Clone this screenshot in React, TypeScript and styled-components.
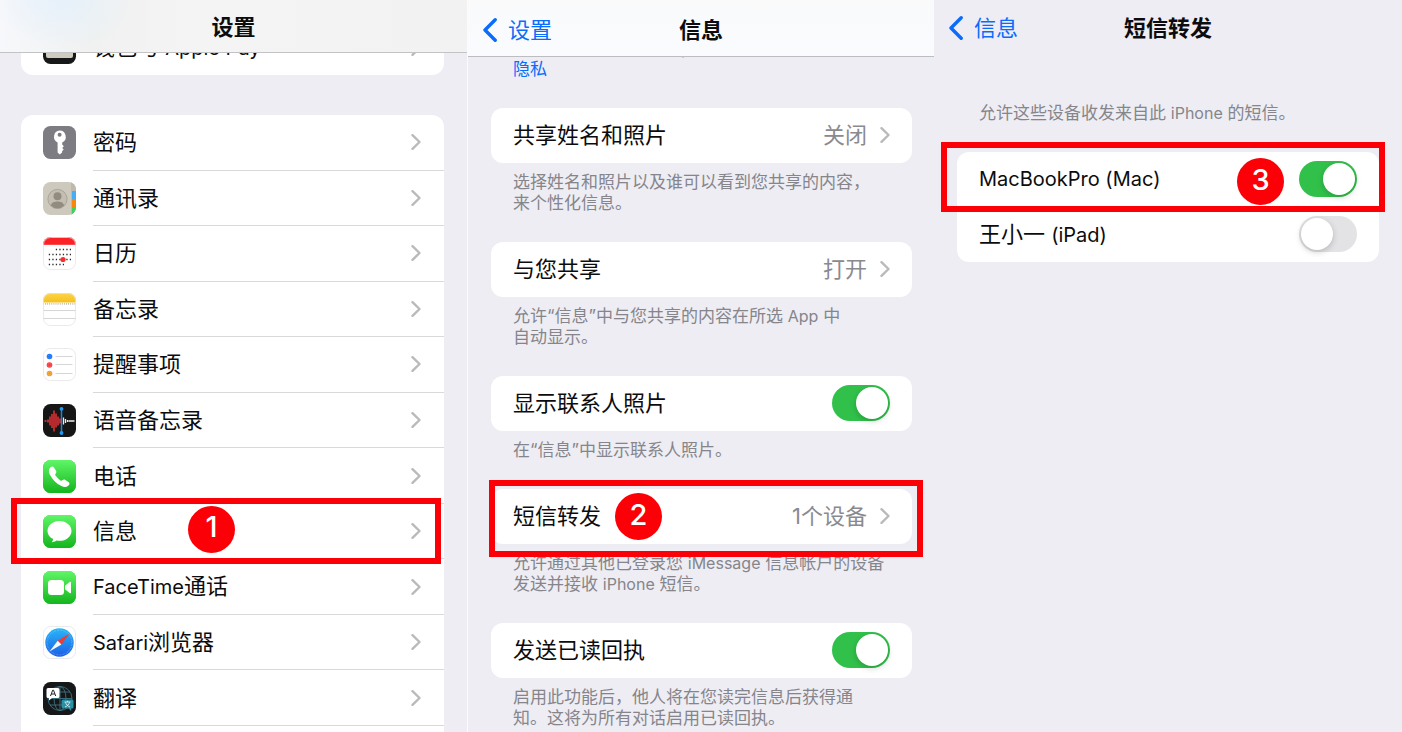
import React from "react";
import styled, { createGlobalStyle, css } from "styled-components";

const GlobalStyle = createGlobalStyle`
  *, *::before, *::after { box-sizing: border-box; }
  body {
    margin: 0;
    background: #eeedf3;
    color: #0c0c0e;
    font-family: Inter, "Noto Sans CJK SC", sans-serif;
    font-size: 22px;
    line-height: 28px;
  }
`;

const Screens = styled.main`
  display: grid;
  grid-template-columns: 467fr 467fr 468fr;
  height: 100vh;
  overflow: hidden;
`;

const Screen = styled.section<{ $divided?: boolean }>`
  display: flex;
  flex-direction: column;
  min-width: 0;
  min-height: 0;
  overflow: hidden;
  background: #eeedf3;
  ${(p) => p.$divided && css`border-left: 1px solid #fbfbfd;`}
`;

const NavBar = styled.header<{ $height: number; $tone?: "warm" | "cool" }>`
  flex: none;
  height: ${(p) => p.$height}px;
  display: grid;
  grid-template-columns: 1fr auto 1fr;
  align-items: center;
  padding: 2px 14px 0;
  ${(p) =>
    p.$tone === "warm" &&
    css`
      border-bottom: 1px solid #c3c3c5;
      background: radial-gradient(ellipse 70px 50px at 62px 0, #e6f1fb, transparent),
        linear-gradient(90deg, #f7f8fb 0, #f0f1f0 90px, #f4f4f4 200px, #f2f2f2 100%);
    `}
  ${(p) =>
    p.$tone === "cool" &&
    css`
      padding-top: 4px;
      border-bottom: 1px solid #bcbcc1;
      background: linear-gradient(#fafafb, #f9fbfe);
    `}
`;

const Title = styled.h1`
  grid-column: 2;
  margin: 0;
  font-size: 22px;
  line-height: 28px;
  font-weight: 600;
`;

const BackButton = styled.button`
  justify-self: start;
  display: flex;
  align-items: center;
  gap: 10px;
  padding: 0;
  border: 0;
  background: none;
  color: #0a6cfb;
  font: inherit;
  cursor: pointer;
`;

const Content = styled.div<{ $top?: number; $left?: number; $right?: number }>`
  flex: 1;
  min-height: 0;
  overflow: hidden;
  padding: ${(p) => p.$top ?? 0}px ${(p) => p.$right ?? 23}px 0 ${(p) => p.$left ?? 23}px;
`;

/* The part of a list that has been scrolled up past the navigation bar. */
const Scrolled = styled.div<{ $by: number }>`
  margin-top: -${(p) => p.$by}px;
`;

const Card = styled.div<{ $gap?: number }>`
  margin-bottom: ${(p) => p.$gap ?? 0}px;
  border-radius: 12px;
  background: #fff;
`;

const AppList = styled(Card)`
  display: grid;
  grid-template-rows: repeat(11, 1fr);
  height: 631px;
  padding-bottom: 20px;
`;

const rowLook = css`
  position: relative;
  display: flex;
  align-items: center;
  width: 100%;
  height: 55px;
  padding: 0 22px 1px;
  border: 0;
  background: none;
  color: inherit;
  font: inherit;
  text-align: left;
`;

const AppRow = styled.button`
  ${rowLook}
  height: 100%;
  min-height: 55px;
  padding: 0 0 0 22px;
  gap: 17px;
  cursor: pointer;
`;

const AppRowBody = styled.span<{ $last?: boolean }>`
  flex: 1;
  align-self: stretch;
  display: flex;
  align-items: center;
  justify-content: space-between;
  padding-right: 23px;
  border-bottom: ${(p) => (p.$last ? "0" : "1px solid #d9d9dc")};
`;

const LinkRow = styled.button`
  ${rowLook}
  cursor: pointer;
`;

const SwitchRow = styled.label`
  ${rowLook}
  justify-content: space-between;
`;

const Value = styled.span`
  margin: 0 13px 0 auto;
  color: #8a8a8e;
`;

const Latin = styled.span`
  font-size: 20px;
`;

const SmallLatin = styled.span`
  font-size: 16px;
`;

const Note = styled.p`
  margin: 0 0 28px;
  padding: 9px 0 0 22px;
  color: #85858b;
  font-size: 17px;
  line-height: 21px;
  white-space: nowrap;
`;

const NoteLink = styled.a`
  color: #0a6cfb;
  text-decoration: none;
`;

const Switch = styled.input`
  appearance: none;
  flex: none;
  width: 58px;
  height: 36px;
  margin: 0;
  padding: 2px;
  border-radius: 18px;
  background: #e3e3e5;
  display: flex;
  cursor: pointer;
  &::before {
    content: "";
    width: 32px;
    height: 32px;
    border-radius: 50%;
    background: #fff;
    box-shadow: 0 2px 6px rgba(0, 0, 0, 0.2);
  }
  &:checked {
    justify-content: flex-end;
    background: #31c14a;
  }
`;

const Highlight = styled.span<{ $inset: string }>`
  position: absolute;
  z-index: 1;
  inset: ${(p) => p.$inset};
  border: 6px solid #fb0007;
  pointer-events: none;
`;

const Badge = styled.span<{ $top: number; $left?: number; $right?: number }>`
  position: absolute;
  z-index: 1;
  top: ${(p) => p.$top}px;
  ${(p) => p.$left !== undefined && css`left: ${p.$left}px;`}
  ${(p) => p.$right !== undefined && css`right: ${p.$right}px;`}
  display: grid;
  place-items: center;
  width: 47px;
  height: 47px;
  padding-bottom: 4px;
  border-radius: 50%;
  background: #fb0007;
  color: #fff;
  font-size: 29px;
  font-weight: 500;
  pointer-events: none;
`;

const Icon = styled.svg`
  flex: none;
  display: block;
`;

const Disclosure = () => (
  <Icon width="10" height="16" viewBox="0 0 10 16" fill="none" aria-hidden="true">
    <path d="M1.5 1.2 8.5 8l-7 6.8" stroke="#bababd" strokeWidth="2.4" strokeLinecap="round" strokeLinejoin="round" />
  </Icon>
);

const Back = ({ label }: { label: string }) => (
  <BackButton type="button">
    <Icon width="16" height="24" viewBox="0 0 16 24" fill="none" aria-hidden="true">
      <path d="M13.2 1.8 3 12l10.200 10.200" stroke="currentColor" strokeWidth="3.400" strokeLinecap="round" strokeLinejoin="round" />
    </Icon>
    {label}
  </BackButton>
);

const Tile = ({ fill, outline, children }: { fill: string; outline?: boolean; children: React.ReactNode }) => (
  <Icon width="33" height="33" viewBox="0 0 33 33" aria-hidden="true">
    <defs>
      <linearGradient id="tile-green" x1="0" y1="0" x2="0" y2="1">
        <stop offset="0" stopColor="#5ff667" />
        <stop offset="1" stopColor="#14b51e" />
      </linearGradient>
      <linearGradient id="tile-yellow" x1="0" y1="0" x2="0" y2="1">
        <stop offset="0" stopColor="#fcd54a" />
        <stop offset="1" stopColor="#f6c01b" />
      </linearGradient>
      <linearGradient id="tile-blue" x1="0" y1="0" x2="0" y2="1">
        <stop offset="0" stopColor="#29b6f5" />
        <stop offset="1" stopColor="#1c5fe8" />
      </linearGradient>
      <clipPath id="tile-shape">
        <rect width="33" height="33" rx="7.5" />
      </clipPath>
    </defs>
    <g clipPath="url(#tile-shape)">
      <rect width="33" height="33" fill={fill === "green" ? "#37d63f" : fill} />
      {fill === "green" && <path d="M0 0h33v33H0Z" fill="url(#tile-green)" />}
      {children}
    </g>
    {outline && <rect x=".5" y=".5" width="32" height="32" rx="7" fill="none" stroke="#e4e4e6" strokeWidth=".8" />}
  </Icon>
);

const WalletIcon = () => (
  <Tile fill="#171818">
    <rect x="3" y="4" width="27" height="23" rx="2" fill="#cfcbbf" />
  </Tile>
);

const KeyIcon = () => (
  <Tile fill="#7d7c82">
    <path
      fill="#fff"
      fillRule="evenodd"
      d="M16.6 4.6a6.2 6.2 0 0 1 2.6 11.8v2.2l1.6 1.6-1.6 1.7 1.5 1.6-1.6 1.7v1.2l-2.3 2.2-2.2-2.2v-10A6.2 6.2 0 0 1 16.6 4.6Zm0 2.1a2 2 0 1 0 0 4 2 2 0 0 0 0-4Z"
    />
  </Tile>
);

const ContactsIcon = () => (
  <Tile fill="#cdc9bc">
    <rect x="28" width="5" height="33" fill="#bdb9ab" />
    <rect x="29" y="9" width="4" height="8" fill="#46aef5" />
    <rect x="29" y="17" width="4" height="8" fill="#fb8410" />
    <rect x="29" y="25" width="4" height="8" fill="#41d158" />
    <circle cx="14.5" cy="17" r="9.6" fill="#c3beb1" stroke="#a19c90" strokeWidth=".8" />
    <circle cx="14.5" cy="14.2" r="4" fill="#918b80" />
    <path d="M7.8 23.4c1-3.2 3.6-4 6.7-4s5.7.8 6.7 4a9.4 9.4 0 0 1-13.4 0Z" fill="#918b80" />
  </Tile>
);

const CalendarIcon = () => (
  <Tile fill="#fff" outline>
    <rect width="33" height="7.8" fill="#fc2125" />
    <path
      d="M12.8 12.5H28M5.8 17.5H28M5.8 22.5H28M5.8 27.5H21"
      stroke="#2a2a2c"
      strokeWidth="1.5"
      strokeDasharray="1.3 2.2"
    />
    <circle cx="20" cy="22.5" r="2.6" fill="#fb2d2f" />
  </Tile>
);

const NotesIcon = () => (
  <Tile fill="#fff" outline>
    <rect width="33" height="9.5" fill="url(#tile-yellow)" />
    <path d="M0 10.900h33" stroke="#b4b4b4" strokeWidth="1.800" strokeDasharray=".8 1.300" />
    <path d="M0 17.500h33M0 25.500h33" stroke="#d6d6d8" />
  </Tile>
);

const RemindersIcon = () => (
  <Tile fill="#fff" outline>
    <path d="M12.5 8.500h17M12.5 16.500h17M12.5 25.500h17" stroke="#d6d6d8" />
    {([["#1a73f8", 8.5], ["#f9373a", 17], ["#f79a1e", 25.500]] as [string, number][]).map(([color, y]) => (
      <g key={color}>
        <circle cx="6.5" cy={y} r="2.8" fill={color} />
        <circle cx="6.5" cy={y} r="1.7" fill="none" stroke="#fff" strokeOpacity=".25" strokeWidth=".6" />
      </g>
    ))}
  </Tile>
);

const VoiceIcon = () => (
  <Tile fill="#161617">
    <path d="M1.500 17h2M5 15.500v3M7 12.500v9M9 10v14M11 6.500v21M13 9.500v14M15 12.500v9M17 14.500v5" stroke="#ea3236" strokeWidth="1.500" />
    <path d="M20.500 13.500v7M22.500 15v4M24.500 16v2M25.500 17h6" stroke="#efefef" strokeWidth="1.300" />
    <path d="M18.500 4.500v25" stroke="#1689de" strokeWidth="1.500" />
    <circle cx="18.500" cy="4.800" r="1.900" fill="#1d9bf5" />
    <circle cx="18.500" cy="29" r="1.900" fill="#1d9bf5" />
  </Tile>
);

const PhoneIcon = () => (
  <Tile fill="green">
    <path
      fill="#fff"
      d="M7 7.8c1.6-1.8 3-1.5 3.9-.2l2 3c.8 1.2.5 2.2-.3 3.1-.6.7-.5 1.2 0 1.9 1.2 1.8 2.9 3.5 4.8 4.8.7.5 1.3.5 1.9-.1 1-.9 2-1 3.1-.3l3 2c1.4 1 1.5 2.3-.2 3.8-1.8 1.6-4.300 1.500-6.800.300-5-2.500-9.200-6.600-11.600-11.600-1.100-2.400-1.300-4.900.200-6.700Z"
    />
  </Tile>
);

const MessagesIcon = () => (
  <Tile fill="green">
    <path
      fill="#fff"
      d="M16.5 6c6.7 0 12 4.4 12 9.9s-5.3 9.9-12 9.9c-1.1 0-2.2-.1-3.2-.4-1.2 1-2.8 1.7-4.7 1.8 1-1 1.6-2 1.6-3.1-3.5-1.7-5.7-4.7-5.7-8.2C4.5 10.4 9.8 6 16.5 6Z"
    />
  </Tile>
);

const FaceTimeIcon = () => (
  <Tile fill="green">
    <rect x="5" y="9" width="16" height="15" rx="3.5" fill="#fff" />
    <path d="m22 14.700 4.600-3.800c.7-.5 1.400-.2 1.400.6v10c0 .8-.7 1.100-1.400.6L22 18.300Z" fill="#fff" />
  </Tile>
);

const SafariIcon = () => (
  <Tile fill="#fff" outline>
    <circle cx="16.5" cy="16.5" r="14.2" fill="url(#tile-blue)" />
    <circle cx="16.5" cy="16.5" r="12.4" fill="none" stroke="#fff" strokeOpacity=".35" strokeWidth="1.3" strokeDasharray=".5 1" />
    <path d="M26.5 7.5 18.4 18.5l-3.7-3.8Z" fill="#ee3b36" />
    <path d="M6.5 25.5l8.2-10.8 3.7 3.8Z" fill="#f7f9fb" />
  </Tile>
);

const TranslateIcon = () => (
  <Tile fill="#161718">
    <g fill="none" stroke="#3d7480" strokeWidth=".9">
      <circle cx="17" cy="16.5" r="12" />
      <ellipse cx="17" cy="16.5" rx="6" ry="12" />
      <path d="M17 4.5v24M5 16.5h24M7 10h20M7 23h20" />
    </g>
    <path d="M5 6h10a1.5 1.5 0 0 1 1.500 1.500v7A1.500 1.500 0 0 1 15 16H9l-3 2.500V16H5a1.500 1.500 0 0 1-1.500-1.500v-7A1.500 1.500 0 0 1 5 6Z" fill="#fff" />
    <path d="m7.500 14 2.200-5.800h.8l2.200 5.800M8.300 12h3.600" fill="none" stroke="#202122" strokeWidth="1" />
    <path d="M20 17.500h9a1.500 1.500 0 0 1 1.500 1.500v6a1.500 1.500 0 0 1-1.500 1.500h-.8V29l-2.700-2.500H20a1.500 1.500 0 0 1-1.500-1.500v-6a1.500 1.500 0 0 1 1.500-1.500Z" fill="#2b8fa6" />
    <path d="M21.500 20h6M24.500 18.800V20m-2 .3c.5 2 2 3.700 4.500 4.700m-.5-4.700c-.5 2-2 3.700-4.500 4.700" fill="none" stroke="#d5f2f6" strokeWidth=".9" />
  </Tile>
);

const apps: { name: React.ReactNode; icon: React.ReactNode; step?: string }[] = [
  { name: "密码", icon: <KeyIcon /> },
  { name: "通讯录", icon: <ContactsIcon /> },
  { name: "日历", icon: <CalendarIcon /> },
  { name: "备忘录", icon: <NotesIcon /> },
  { name: "提醒事项", icon: <RemindersIcon /> },
  { name: "语音备忘录", icon: <VoiceIcon /> },
  { name: "电话", icon: <PhoneIcon /> },
  { name: "信息", icon: <MessagesIcon />, step: "1" },
  { name: <><Latin>FaceTime</Latin>通话</>, icon: <FaceTimeIcon /> },
  { name: <><Latin>Safari</Latin>浏览器</>, icon: <SafariIcon /> },
  { name: "翻译", icon: <TranslateIcon /> },
];

const SettingsScreen = () => (
  <Screen>
    <NavBar $height={53} $tone="warm">
      <Title>设置</Title>
    </NavBar>
    <Content $left={21}>
      <Scrolled $by={33}>
        <Card $gap={40}>
          <AppRow type="button">
            <WalletIcon />
            <AppRowBody $last>
              <span>钱包与 <Latin>Apple Pay</Latin></span>
              <Disclosure />
            </AppRowBody>
          </AppRow>
        </Card>
        <AppList>
          {apps.map((app, i) => (
            <AppRow key={i} type="button">
              {app.icon}
              <AppRowBody>
                <span>{app.name}</span>
                <Disclosure />
              </AppRowBody>
              {app.step && (
                <>
                  <Highlight $inset="-6px 3px -5px -10px" />
                  <Badge $top={2} $left={167}>{app.step}</Badge>
                </>
              )}
            </AppRow>
          ))}
        </AppList>
      </Scrolled>
    </Content>
  </Screen>
);

const MessagesScreen = () => (
  <Screen $divided>
    <NavBar $height={57} $tone="cool">
      <Back label="设置" />
      <Title>信息</Title>
    </NavBar>
    <Content $right={22}>
      <Scrolled $by={28}>
        <Note>
          运营商。{" "}
          <NoteLink href="#privacy">
            关于 <SmallLatin>iMessage</SmallLatin> 信息与 <SmallLatin>FaceTime</SmallLatin> 通话与
            <br />
            隐私
          </NoteLink>
        </Note>
        <Card>
          <LinkRow type="button">
            共享姓名和照片
            <Value>关闭</Value>
            <Disclosure />
          </LinkRow>
        </Card>
        <Note>
          选择姓名和照片以及谁可以看到您共享的内容，
          <br />
          来个性化信息。
        </Note>
        <Card>
          <LinkRow type="button">
            与您共享
            <Value>打开</Value>
            <Disclosure />
          </LinkRow>
        </Card>
        <Note>
          允许“信息”中与您共享的内容在所选 <SmallLatin>App</SmallLatin> 中
          <br />
          自动显示。
        </Note>
        <Card>
          <SwitchRow>
            显示联系人照片
            <Switch type="checkbox" defaultChecked />
          </SwitchRow>
        </Card>
        <Note>在“信息”中显示联系人照片。</Note>
        <Card>
          <LinkRow type="button">
            短信转发
            <Value>1个设备</Value>
            <Disclosure />
            <Highlight $inset="-9px -11px -13px -2px" />
            <Badge $top={4} $left={124}>2</Badge>
          </LinkRow>
        </Card>
        <Note>
          允许通过其他已登录您 <SmallLatin>iMessage</SmallLatin> 信息帐户的设备
          <br />
          发送并接收 <SmallLatin>iPhone</SmallLatin> 短信。
        </Note>
        <Card>
          <SwitchRow>
            发送已读回执
            <Switch type="checkbox" defaultChecked />
          </SwitchRow>
        </Card>
        <Note>
          启用此功能后，他人将在您读完信息后获得通
          <br />
          知。这将为所有对话启用已读回执。
        </Note>
      </Scrolled>
    </Content>
  </Screen>
);

const ForwardingScreen = () => (
  <Screen>
    <NavBar $height={54}>
      <Back label="信息" />
      <Title>短信转发</Title>
    </NavBar>
    <Content $top={40}>
      <Note>允许这些设备收发来自此 <SmallLatin>iPhone</SmallLatin> 的短信。</Note>
      <Card>
        <SwitchRow>
          <Latin>MacBookPro (Mac)</Latin>
          <Switch type="checkbox" defaultChecked />
          <Highlight $inset="-10px -6px -5px -16px" />
          <Badge $top={6} $right={95}>3</Badge>
        </SwitchRow>
        <SwitchRow>
          <span>王小一 <Latin>(iPad)</Latin></span>
          <Switch type="checkbox" />
        </SwitchRow>
      </Card>
    </Content>
  </Screen>
);

export default function App() {
  return (
    <>
      <GlobalStyle />
      <Screens>
        <SettingsScreen />
        <MessagesScreen />
        <ForwardingScreen />
      </Screens>
    </>
  );
}
